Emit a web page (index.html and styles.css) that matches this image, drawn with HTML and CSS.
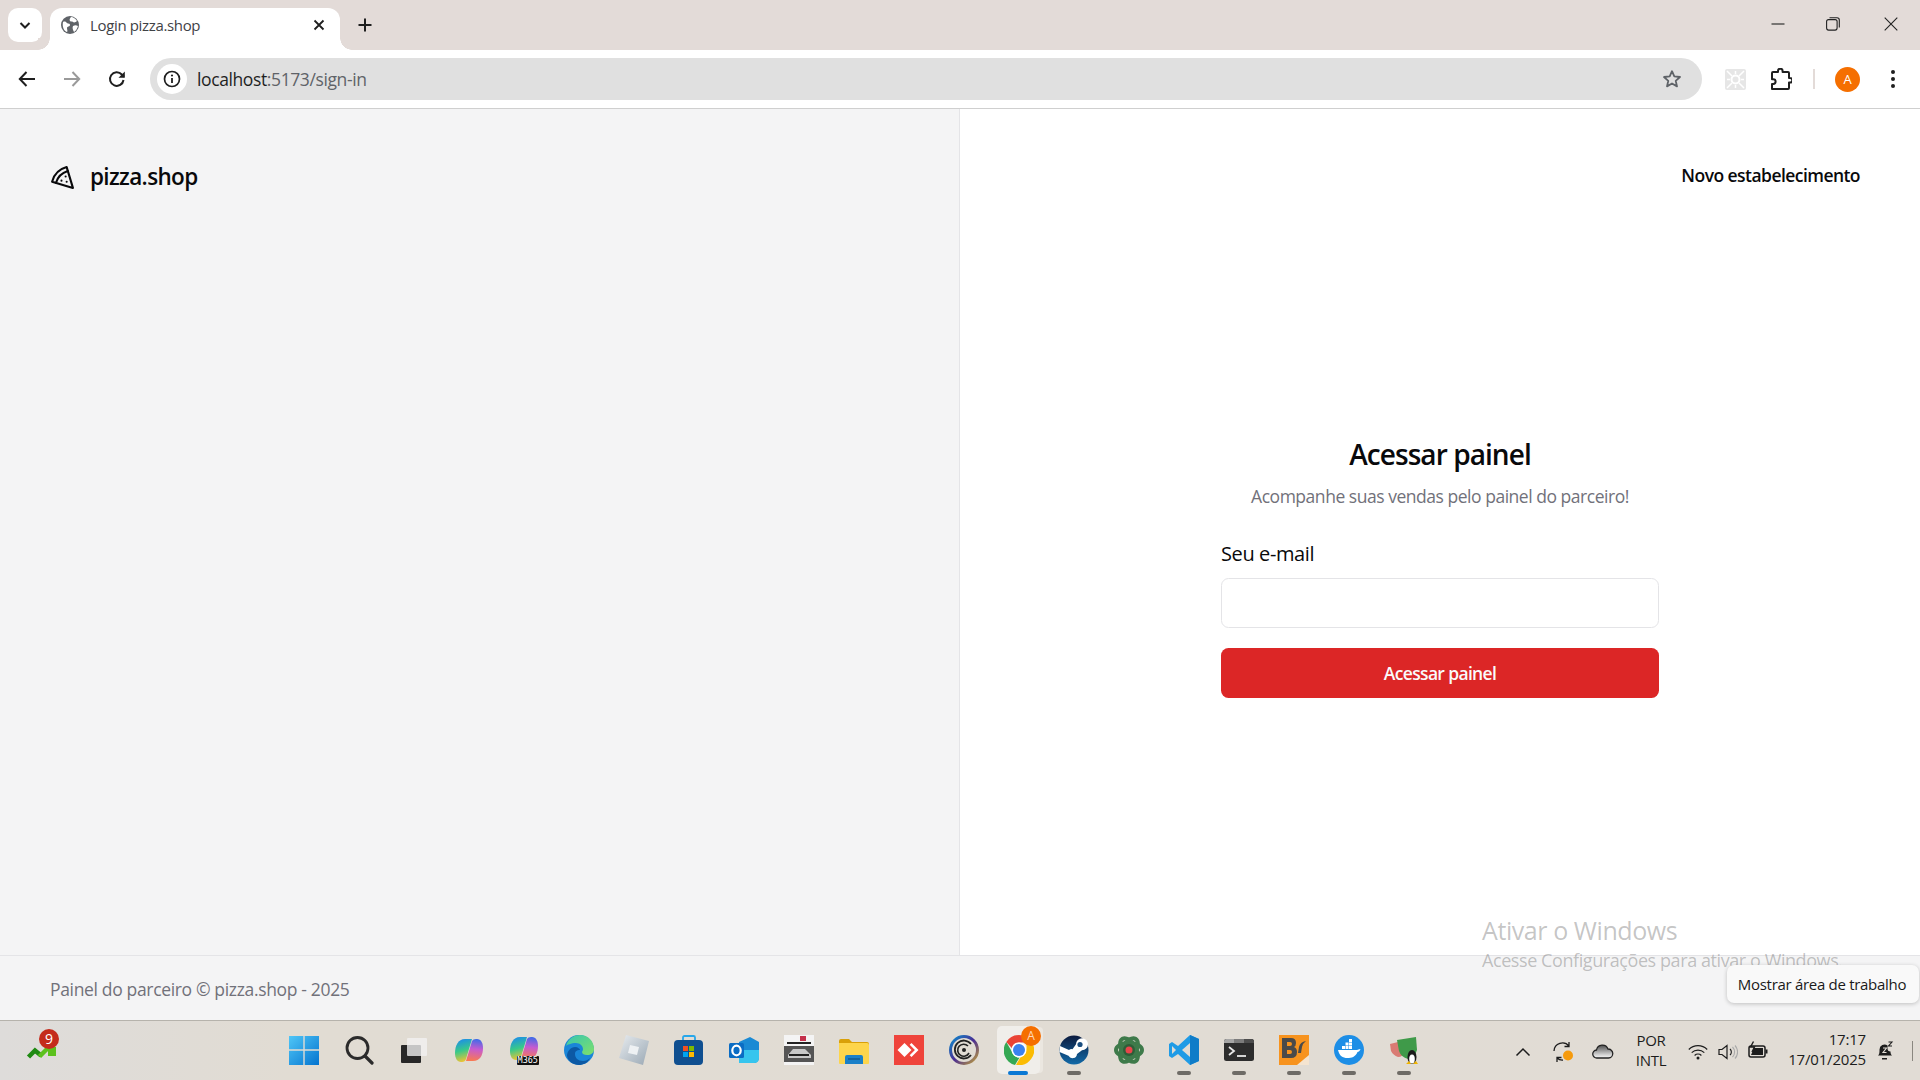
FILE: index.html
```html
<!DOCTYPE html>
<html lang="pt-BR">
<head>
<meta charset="utf-8">
<title>Login pizza.shop</title>
<link rel="stylesheet" href="styles.css">
</head>
<body>
<div class="screen">
  <div class="tabstrip">
    <div class="tab-list-btn"><svg width="16" height="16" viewBox="0 0 16 16"><path d="M3.500 6 8 10.500 12.500 6" fill="none" stroke="#1f1f1f" stroke-width="2"/></svg></div>
    <div class="tab">
      <svg class="favicon" width="18" height="18" viewBox="0 0 18 18"><circle cx="9" cy="9" r="9" fill="#5f6368"/><path d="M2 6c2-1 3 0 4 1s3 0 3 2-3 1-3 3 1 3 0 4C3 15 1 11 2 6zM10 1c2 0 5 2 6 4-1 1-3 2-4 1s-2 0-3-1 0-3 1-4zM12 10c2-1 3-1 5 0-1 3-2 5-4 6-1-2-2-4-1-6z" fill="#fff"/></svg>
      <span class="tab-title">Login pizza.shop</span>
      <svg class="tab-close" width="14" height="14" viewBox="0 0 14 14"><path d="M2.500 2.500l9 9M11.500 2.500l-9 9" stroke="#1f1f1f" stroke-width="1.800"/></svg>
    </div>
    <svg class="newtab" width="16" height="16" viewBox="0 0 16 16"><path d="M8 1.500v13M1.500 8h13" stroke="#1f1f1f" stroke-width="2"/></svg>
    <div class="win-controls">
      <svg width="14" height="14" viewBox="0 0 14 14"><path d="M.5 7h13" stroke="#222" stroke-width="1.100"/></svg>
      <svg class="win-restore" width="14" height="14" viewBox="0 0 14 14"><rect x=".6" y="2.600" width="10.500" height="10.500" rx="2" fill="none" stroke="#222" stroke-width="1.100"/><path d="M3.500.7h7.500a2.300 2.300 0 0 1 2.300 2.300v7.500" fill="none" stroke="#222" stroke-width="1.100"/></svg>
      <svg width="14" height="14" viewBox="0 0 14 14"><path d="M.7.700l12.600 12.600M13.300.7.700 13.300" stroke="#222" stroke-width="1.100"/></svg>
    </div>
  </div>

  <div class="toolbar">
    <div class="nav-icons">
      <svg width="20" height="20" viewBox="0 0 20 20"><path d="M18 10H3M9.500 3 2.800 10l6.700 7" fill="none" stroke="#1f1f1f" stroke-width="2"/></svg>
      <svg width="20" height="20" viewBox="0 0 20 20"><path d="M2 10h15M10.500 3l6.700 7-6.700 7" fill="none" stroke="#9a9a9a" stroke-width="2"/></svg>
      <svg width="20" height="20" viewBox="0 0 20 20"><path d="M16.500 11a6.800 6.800 0 1 1-1.700-5.500L17 7.800" fill="none" stroke="#1f1f1f" stroke-width="2"/><path d="M17.800 2.500v6.300h-6.300z" fill="#1f1f1f"/></svg>
    </div>
    <div class="omnibox">
      <div class="site-info"><svg width="18" height="18" viewBox="0 0 18 18"><circle cx="9" cy="9" r="7.500" fill="none" stroke="#1f1f1f" stroke-width="1.700"/><path d="M9 8v5" stroke="#1f1f1f" stroke-width="1.800"/><circle cx="9" cy="5.500" r="1.100" fill="#1f1f1f"/></svg></div>
      <span class="url"><span class="url-host">localhost</span>:5173/sign-in</span>
      <svg class="star" width="20" height="20" viewBox="0 0 20 20"><path d="M10 2.200l2.300 5.200 5.700.6-4.300 3.800 1.300 5.600L10 14.500l-5 2.900 1.300-5.600L2 8l5.700-.6z" fill="none" stroke="#5f6368" stroke-width="1.800" stroke-linejoin="round"/></svg>
    </div>
    <div class="toolbar-actions">
      <svg class="ext-pale" width="21" height="21" viewBox="0 0 21 21"><rect width="21" height="21" rx="2" fill="#e6e6e6"/><circle cx="10.500" cy="10.500" r="4" fill="none" stroke="#fff" stroke-width="2"/><path d="M2 2l5 5M19 2l-5 5M2 19l5-5M19 19l-5-5M2 10.500h3M16 10.500h3M10.500 2v3M10.500 16v3" stroke="#fff" stroke-width="1.500"/></svg>
      <svg class="puzzle" width="22" height="22" viewBox="0 0 22 22"><path d="M3 4h5V3a2.300 2.300 0 0 1 4.600 0v1H18a1 1 0 0 1 1 1v5h1a2.300 2.300 0 0 1 0 4.600h-1V20a1 1 0 0 1-1 1H2v-5h1.200a2.400 2.400 0 0 0 0-4.800H2V5a1 1 0 0 1 1-1z" fill="none" stroke="#1f1f1f" stroke-width="2" stroke-linejoin="round"/></svg>
      <span class="tb-sep"></span>
      <span class="avatar">A</span>
      <svg class="dots" width="6" height="20" viewBox="0 0 6 20"><circle cx="3" cy="3" r="2" fill="#1f1f1f"/><circle cx="3" cy="10" r="2" fill="#1f1f1f"/><circle cx="3" cy="17" r="2" fill="#1f1f1f"/></svg>
    </div>
  </div>

  <div class="page">
    <div class="columns">
      <aside class="left">
        <div class="brand">
          <svg width="25" height="25" viewBox="0 0 24 24" fill="none" stroke="currentColor" stroke-width="2" stroke-linecap="round" stroke-linejoin="round"><path d="M15 11h.01"/><path d="M11 15h.01"/><path d="M16 16h.01"/><path d="m2 16 20 6-6-20A20 20 0 0 0 2 16"/><path d="M5.710 17.110a17.040 17.040 0 0 1 11.400-11.400"/></svg>
          <span>pizza.shop</span>
        </div>
      </aside>
      <main class="right">
        <a class="new-link">Novo estabelecimento</a>
        <div class="form">
          <h1 class="title">Acessar painel</h1>
          <p class="subtitle">Acompanhe suas vendas pelo painel do parceiro!</p>
          <label class="label">Seu e-mail</label>
          <div class="input"></div>
          <button class="submit">Acessar painel</button>
        </div>
      </main>
    </div>
    <footer class="footer">Painel do parceiro © pizza.shop - 2025</footer>
    <div class="watermark">
      <div class="wm-big">Ativar o Windows</div>
      <div class="wm-small">Acesse Configurações para ativar o Windows.</div>
    </div>
    <div class="tooltip">Mostrar área de trabalho</div>
  </div>

  <div class="taskbar">
    <div class="widgets">
      <svg width="34" height="34" viewBox="0 0 34 34"><path d="M3.500 24l6.500-6.500 6 5" fill="none" stroke="#1f8a12" stroke-width="4.500"/><path d="M14.500 23.500l9-9" stroke="#5cc11d" stroke-width="4.500"/><rect x="23" y="14" width="8" height="9" fill="#5cc11d"/></svg>
      <span class="badge">9</span>
    </div>
    <div class="apps">
      <svg class="app" viewBox="0 0 30 30"><defs><linearGradient id="w" x1="0" y1="0" x2="1" y2="1"><stop offset="0" stop-color="#4fc6f7"/><stop offset="1" stop-color="#0474cf"/></linearGradient></defs><path d="M0 1h14.300v13.300H0zM15.700 1H30v13.300H15.700zM0 15.700h14.300V30H0zM15.700 15.700H30V30H15.700z" fill="url(#w)"/></svg>
      <svg class="app" viewBox="0 0 30 30"><circle cx="13.500" cy="13" r="10.500" fill="none" stroke="#2b2b2b" stroke-width="2.800"/><path d="M21 21l7 7" stroke="#2b2b2b" stroke-width="3.200" stroke-linecap="round"/></svg>
      <svg class="app" viewBox="0 0 30 30"><rect x="2" y="10" width="20" height="18" rx="1" fill="#272727"/><rect x="8" y="3" width="20" height="18" rx="1" fill="#f2f2f2" opacity=".78"/></svg>
      <svg class="app" viewBox="0 0 30 30"><defs><linearGradient id="c1" x1=".3" y1="0" x2=".5" y2="1"><stop offset="0" stop-color="#1c8dea"/><stop offset=".5" stop-color="#38c98a"/><stop offset="1" stop-color="#f4c430"/></linearGradient><linearGradient id="c2" x1=".5" y1="0" x2=".4" y2="1"><stop offset="0" stop-color="#3f6be8"/><stop offset=".45" stop-color="#c55bd0"/><stop offset="1" stop-color="#fa7a50"/></linearGradient></defs><path d="M11 4h7l-6 20q-1 3-4 3H7C3 27 1 23 1 18c0-7 3-14 10-14z" fill="url(#c1)"/><path d="M19 26h-7l6-20q1-2 4-2h1c4 0 6 4 6 9 0 7-3 13-10 13z" fill="url(#c2)"/></svg>
      <div class="app app-m365"><svg viewBox="0 0 30 30"><path d="M11 2h7l-6 20q-1 3-4 3H7C3 25 1 21 1 16c0-7 3-14 10-14z" fill="url(#c1)"/><path d="M19 24h-7l6-20q1-2 4-2h1c4 0 6 4 6 9 0 7-3 13-10 13z" fill="url(#c2)"/></svg><span class="m365">M365</span></div>
      <svg class="app" viewBox="0 0 30 30"><defs><linearGradient id="e1" x1="0" y1="0" x2="1" y2="1"><stop offset="0" stop-color="#37c6b0"/><stop offset="1" stop-color="#7fe06a"/></linearGradient></defs><circle cx="15" cy="15" r="15" fill="#1a86d8"/><path d="M2 11C4 3 11 0 16 0c8 0 14 6 14 14 0 4-3 6-7 6-3 0-5-1-5-3 0-1 1-1 1-3 0-3-3-6-7-6-5 0-9 2-10 3z" fill="url(#e1)"/><path d="M11 19c0 4 3 7 8 7 3 0 5-1 7-3-2 5-7 7-11 7-6 0-11-4-12-9 0-5 4-9 8-9 3 0 5 2 5 3-3 0-5 1-5 4z" fill="#0c59a4"/></svg>
      <svg class="app" viewBox="0 0 30 30"><defs><linearGradient id="r" x1="0" y1="0" x2="1" y2="1"><stop offset="0" stop-color="#e8ecef"/><stop offset="1" stop-color="#9aa8b4"/></linearGradient></defs><path d="M7 0l23 6-6 24L0 23z" fill="url(#r)"/><path d="M11 10l9 2-2 8-9-2z" fill="#eef1f3"/></svg>
      <svg class="app" viewBox="0 0 30 30"><path d="M9 6V2.500A1.500 1.500 0 0 1 10.500 1h9A1.500 1.500 0 0 1 21 2.500V6" fill="none" stroke="#27a7ea" stroke-width="1.800"/><rect y="5" width="29" height="25" rx="4" fill="#0f4f90"/><path d="M9 11h5v5H9z" fill="#f25022"/><path d="M15 11h5v5h-5z" fill="#7fba00"/><path d="M9 17h5v5H9z" fill="#00a4ef"/><path d="M15 17h5v5h-5z" fill="#ffb900"/></svg>
      <svg class="app" viewBox="0 0 30 30"><path d="M10 7l11-5 9 5v15q0 6-6 6H10z" fill="#1a8ad4"/><path d="M10 15h20v8q0 5-5 5H10z" fill="#36c5ee"/><rect y="8" width="15" height="15" rx="1.500" fill="#0a6cc4"/><ellipse cx="7.500" cy="15.500" rx="4.200" ry="4.800" fill="none" stroke="#fff" stroke-width="2.200"/></svg>
      <svg class="app" viewBox="0 0 30 30"><rect width="30" height="30" fill="#f4f4f4"/><rect y="11" width="30" height="16" fill="#555"/><path d="M4 20l5-6h12l6 6v3H4z" fill="#c8c8c8"/><rect x="5" y="19" width="20" height="2" fill="#222"/><rect x="16" y="1" width="6" height="5" fill="#c4314b"/><rect x="3" y="7" width="24" height="2" fill="#222"/></svg>
      <svg class="app" viewBox="0 0 30 30"><path d="M0 6a2 2 0 0 1 2-2h8l3 3h15a2 2 0 0 1 2 2v3H0z" fill="#d9a008"/><path d="M0 8h28a2 2 0 0 1 2 2v18a1 1 0 0 1-1 1H1a1 1 0 0 1-1-1z" fill="#fdd54b"/><path d="M6 22a2 2 0 0 1 2-2h14a2 2 0 0 1 2 2v7H6z" fill="#1a80c8"/><path d="M9 24h12" stroke="#0f4f82" stroke-width="1.200"/></svg>
      <svg class="app" viewBox="0 0 30 30"><rect width="30" height="30" fill="#ef443b"/><path d="M10.500 8l7 7-7 7-7-7z" fill="#fff"/><path d="M17.500 8l7 7-7 7-1.800-1.800 5.200-5.200-5.200-5.200z" fill="#fff"/></svg>
      <svg class="app" viewBox="0 0 30 30"><defs><linearGradient id="u" x1="0" y1="0" x2="1" y2="1"><stop offset="0" stop-color="#0a8fd0"/><stop offset=".5" stop-color="#4a2c92"/><stop offset="1" stop-color="#c2a23a"/></linearGradient></defs><circle cx="15" cy="15" r="13.500" fill="none" stroke="url(#u)" stroke-width="3"/><path d="M22 20a9 9 0 1 1 0-11" fill="none" stroke="#222" stroke-width="1.800"/><path d="M20 18a6 6 0 1 1-1-7" fill="none" stroke="#222" stroke-width="1.600"/><circle cx="15" cy="15" r="2" fill="#222"/></svg>
      <div class="app-active">
        <svg class="app" viewBox="0 0 30 30"><path d="M15 0a15 15 0 0 1 13 7.500H15a7.500 7.500 0 0 0-7.200 5.500L2.300 7A15 15 0 0 1 15 0z" fill="#ea4335"/><path d="M2.300 7l6.500 11.300a7.500 7.500 0 0 0 6.800 4.200L11 30A15 15 0 0 1 2.300 7z" fill="#34a853"/><path d="M28 7.500A15 15 0 0 1 12 29.800l6.600-11A7.500 7.500 0 0 0 21 7.500z" fill="#fbbc04"/><circle cx="15" cy="15" r="7.500" fill="#fff"/><circle cx="15" cy="15" r="6" fill="#3b82ee"/></svg>
        <span class="chrome-badge">A</span>
        <span class="pill pill-blue"></span>
      </div>
      <div class="app-run"><svg class="app" viewBox="0 0 30 30"><defs><linearGradient id="s" x1="0" y1="0" x2="0" y2="1"><stop offset="0" stop-color="#0c1b3e"/><stop offset="1" stop-color="#126aa8"/></linearGradient></defs><circle cx="15" cy="15" r="14.500" fill="url(#s)"/><path d="M.5 17l9 3.700a4.500 4.500 0 0 0 8.500-1.800l5-3.700a6 6 0 1 0-6-6l-3.500 5a4.500 4.500 0 0 0-3.500.7L1 11z" fill="#fff"/><circle cx="21" cy="9.500" r="2.600" fill="#1a4e80"/></svg><span class="pill"></span></div>
      <svg class="app" viewBox="0 0 30 30"><g fill="none" stroke="#3e7a4a" stroke-width="4"><ellipse cx="15" cy="15" rx="13" ry="7"/><ellipse cx="15" cy="15" rx="13" ry="7" transform="rotate(60 15 15)"/><ellipse cx="15" cy="15" rx="13" ry="7" transform="rotate(120 15 15)"/></g><circle cx="15" cy="15" r="6" fill="#2e5e38"/><circle cx="15" cy="15" r="3.500" fill="#e8454a"/></svg>
      <div class="app-run"><svg class="app" viewBox="0 0 30 30"><path d="M21 0l9 4v22l-9 4-12-11-6 4-3-2v-12l3-2 6 4z" fill="#1f9be6"/><path d="M21 0v30l9-4V4z" fill="#0f7cc8"/><path d="M21 8l-8 7 8 7z" fill="#e1dcd4"/><path d="M3 11v8l4-4z" fill="#e1dcd4"/></svg><span class="pill"></span></div>
      <div class="app-run"><svg class="app" viewBox="0 0 30 30"><rect y="4" width="30" height="22" rx="2.500" fill="#2d2d2d"/><path d="M0 8V6.500A2.500 2.500 0 0 1 2.500 4H10v4z" fill="#a6a6a6"/><path d="M10 4h10v4H10z" fill="#7c7c7c"/><path d="M20 4h7.500A2.500 2.500 0 0 1 30 6.500V8H20z" fill="#4d4d4d"/><path d="M5 12l5 4-5 4" fill="none" stroke="#e8e8e8" stroke-width="1.800"/><path d="M13 21h9" stroke="#e8e8e8" stroke-width="1.800"/></svg><span class="pill"></span></div>
      <div class="app-run"><svg class="app" viewBox="0 0 30 30"><rect width="30" height="30" fill="#f7931e"/><path d="M3 3h9q5 0 5 5 0 3-2 4 3 1 3 5 0 6-6 6H3z" fill="#4a4a4a"/><path d="M8 7v4h3q2 0 2-2t-2-2zM8 15v4h3q2 0 2-2t-2-2z" fill="#f7931e"/><path d="M27 6q-6 1-7 6l-1 6h3l1-6q1-4 4-6z" fill="#4a4a4a"/><path d="M30 20v10H18z" fill="#f4e4d0"/></svg><span class="pill"></span></div>
      <div class="app-run"><svg class="app" viewBox="0 0 30 30"><circle cx="15" cy="15" r="15" fill="#1d8ee6"/><path d="M4 15h19c1 0 2-1 3.500-1-.5 2-2 3-3 3-2 5-6 6-10 6-5 0-8-2-9.500-8z" fill="#fff"/><path d="M8 11h3v3H8zM11.500 11h3v3h-3zM15 11h3v3h-3zM11.500 7.500h3v3h-3zM15 7.500h3v3h-3zM15 4h3v3h-3z" fill="#fff"/></svg><span class="pill"></span></div>
      <div class="app-run"><svg class="app" viewBox="0 0 30 30"><path d="M1 9l12-3 2 11q-1 5-6 5-5-2-7-6z" fill="#d97b73"/><path d="M8 5l19-3 1 13q-2 7-9 9-7-2-9-8z" fill="#3f9a49"/><ellipse cx="23" cy="22" rx="4.500" ry="7" fill="#1a1a1a"/><ellipse cx="23" cy="24" rx="2.800" ry="4.500" fill="#fff"/><path d="M17 29l3-3 2 3zM24 29l3-3 2 3z" fill="#f0b400"/></svg><span class="pill"></span></div>
    </div>
    <div class="tray">
      <svg class="t-chev" width="16" height="10" viewBox="0 0 16 10"><path d="M1.500 8.500 8 2l6.500 6.500" fill="none" stroke="#1c1c1c" stroke-width="1.500"/></svg>
      <svg class="t-sync" width="22" height="22" viewBox="0 0 22 22"><path d="M2 10a8.500 8.500 0 0 1 15-5M5 17a8 8 0 0 0 6 2M17 1v4.500h-4.500M5 21v-4.500h4.500" fill="none" stroke="#1c1c1c" stroke-width="1.300"/><circle cx="16" cy="14.500" r="5" fill="#f59a0c"/></svg>
      <svg class="t-cloud" width="22" height="16" viewBox="0 0 22 16"><defs><linearGradient id="cl" x1="0" y1="0" x2="0" y2="1"><stop offset="0" stop-color="#4f4f4f"/><stop offset=".75" stop-color="#d4d4d4"/><stop offset="1" stop-color="#f4f4f4"/></linearGradient></defs><path d="M5 15a4 4 0 0 1-.5-8A6 6 0 0 1 16 6a4.500 4.500 0 0 1 .5 9z" fill="url(#cl)" stroke="#222" stroke-width="1.300"/></svg>
      <div class="t-lang"><span>POR</span><span>INTL</span></div>
      <svg class="t-wifi" width="20" height="16" viewBox="0 0 20 16"><path d="M.8 5.500a13 13 0 0 1 18.400 0M3.700 8.600a9 9 0 0 1 12.600 0M6.600 11.500a5 5 0 0 1 6.800 0" fill="none" stroke="#1c1c1c" stroke-width="1.200"/><circle cx="10" cy="14" r="1.500" fill="#1c1c1c"/></svg>
      <svg class="t-vol" width="20" height="16" viewBox="0 0 20 16"><path d="M1 5.500h3L9 1.500v13l-5-4H1z" fill="none" stroke="#1c1c1c" stroke-width="1.200"/><path d="M12 5a4 4 0 0 1 0 6" fill="none" stroke="#1c1c1c" stroke-width="1.100"/><path d="M14.500 3a7 7 0 0 1 0 10M17 1.500a9.500 9.500 0 0 1 0 13" fill="none" stroke="#aaa" stroke-width="1.100"/></svg>
      <svg class="t-bat" width="20" height="18" viewBox="0 0 20 18"><rect x="1" y="5" width="16" height="11" rx="2" fill="none" stroke="#1c1c1c" stroke-width="1.500"/><path d="M6 7h9v7H3z" fill="#1c1c1c"/><rect x="17.500" y="8.500" width="2" height="4" fill="#1c1c1c"/><path d="M5.500 .5 2.500 6h4L4 11" fill="none" stroke="#1c1c1c" stroke-width="1.400"/></svg>
      <div class="t-clock"><span>17:17</span><span>17/01/2025</span></div>
      <svg class="t-bell" width="18" height="20" viewBox="0 0 18 20"><path d="M2 14.500c1.500-1 1.500-3 1.500-6a5 5 0 0 1 8-4v3a3 3 0 0 0 3 3c0 2 .5 3 1.500 4z" fill="#1c1c1c"/><path d="M6 17h5v1.500H6z" fill="#1c1c1c"/><path d="M7 7h3.500L7 11.500h3.500" fill="none" stroke="#e1dcd4" stroke-width="1.100"/><path d="M12.500 1H16l-3.500 4H16" fill="none" stroke="#1c1c1c" stroke-width="1.100"/></svg>
      <span class="t-div"></span>
    </div>
  </div>
</div>
</body>
</html>
```
FILE: styles.css
```css
* { box-sizing: border-box; margin: 0; padding: 0; }
html, body { width: 1920px; height: 1080px; overflow: hidden; }
body { font-family: "Open Sans", "Noto Sans", sans-serif; color: #09090b; background: #fff; }
.screen { display: flex; flex-direction: column; width: 1920px; height: 1080px; }

/* tab strip */
.tabstrip { display: flex; align-items: flex-end; height: 50px; background: #e3dbd8; padding-left: 8px; flex: none; position: relative; }
.tab-list-btn { width: 34px; height: 34px; margin-bottom: 8px; background: #fff; border-radius: 10px; display: flex; align-items: center; justify-content: center; }
.tab { position: relative; display: flex; align-items: center; width: 290px; height: 42px; margin-left: 8px; padding: 0 14px 8px 11px; background: #fff; border-radius: 12px 12px 0 0; }
.tab::before, .tab::after { content: ""; position: absolute; bottom: 0; width: 12px; height: 12px; }
.tab::before { left: -12px; background: radial-gradient(circle at 0 0, #e3dbd8 11.500px, #fff 12px); }
.tab::after { right: -12px; background: radial-gradient(circle at 100% 0, #e3dbd8 11.500px, #fff 12px); }
.favicon { flex: none; }
.tab-title { margin-left: 11px; flex: 1; font-size: 15px; letter-spacing: -.35px; color: #3f4246; white-space: nowrap; }
.tab-close { flex: none; }
.newtab { margin: 0 0 17px 17px; flex: none; }
.win-controls { margin-left: auto; display: flex; gap: 41px; padding-right: 22px; margin-bottom: 19px; }
.win-restore { margin-right: 3px; }

/* toolbar */
.toolbar { display: flex; align-items: center; height: 59px; background: #fff; border-bottom: 1px solid #cfcfcf; border-radius: 12px 12px 0 0; flex: none; position: relative; }
.nav-icons { display: flex; align-items: center; gap: 25px; padding-left: 17px; width: 150px; flex: none; }
.omnibox { width: 1552px; height: 42px; background: #e0e0e0; border-radius: 21px; display: flex; align-items: center; padding: 0 20px 0 7px; flex: none; }
.site-info { width: 30px; height: 30px; border-radius: 50%; background: #fff; display: flex; align-items: center; justify-content: center; flex: none; }
.url { margin-left: 10px; font-size: 17.500px; letter-spacing: -.39px; color: #5f6368; flex: 1; white-space: nowrap; }
.url-host { color: #1f1f1f; }
.star { flex: none; }
.toolbar-actions { display: flex; align-items: center; flex: 1; padding-left: 23px; }
.puzzle { margin-left: 24px; }
.tb-sep { width: 2px; height: 20px; background: #e3dbd8; margin-left: 21px; }
.avatar { width: 25px; height: 25px; border-radius: 50%; background: #f56f00; color: #fff; font-size: 13px; display: flex; align-items: center; justify-content: center; margin-left: 20px; }
.dots { margin-left: 30px; }

/* page */
.page { flex: 1; display: flex; flex-direction: column; position: relative; min-height: 0; }
.columns { display: flex; flex: 1; min-height: 0; }
.left { width: 960px; background: #f4f4f5; border-right: 1px solid #e4e4e7; padding: 43px 50px; flex: none; }
.brand { display: flex; align-items: center; gap: 15px; font-size: 22.500px; font-weight: 600; letter-spacing: -.65px; line-height: 50px; height: 50px; color: #09090b; }
.right { flex: 1; display: flex; flex-direction: column; background: #fff; }
.new-link { align-self: flex-end; margin: 41px 60px 0 0; height: 50px; line-height: 50px; font-size: 17.500px; font-weight: 600; letter-spacing: -.55px; color: #09090b; white-space: nowrap; }
.form { width: 438px; margin: 233px 0 0 261px; display: flex; flex-direction: column; }
.title { font-size: 28px; line-height: 42px; font-weight: 600; letter-spacing: -.93px; text-align: center; color: #09090b; }
.subtitle { margin-top: 9px; font-size: 17.500px; line-height: 25px; letter-spacing: -.47px; text-align: center; color: #71717a; }
.label { margin-top: 32px; font-size: 20px; line-height: 25px; letter-spacing: -.4px; color: #09090b; }
.input { margin-top: 12px; height: 50px; border: 1px solid #e4e4e7; border-radius: 7.500px; background: #fff; }
.submit { margin-top: 20px; height: 50px; border: none; border-radius: 7.500px; background: #dc2626; color: #fafafa; font: 600 17.500px "Open Sans", "Noto Sans", sans-serif; letter-spacing: -.66px; }
.footer { height: 65px; flex: none; background: #f4f4f5; border-top: 1px solid #e4e4e7; padding: 2px 0 0 50px; display: flex; align-items: center; font-size: 17.500px; letter-spacing: -.34px; color: #71717a; }

/* overlays */
.watermark { position: absolute; left: 1482px; top: 806px; color: rgba(90,90,90,.36); white-space: nowrap; }
.wm-big { font-size: 25px; line-height: 30px; letter-spacing: -.42px; }
.wm-small { font-size: 18px; line-height: 26px; margin-top: 2px; letter-spacing: -.42px; }
.tooltip { position: absolute; left: 1727px; top: 856px; width: 192px; height: 38px; background: #f9f9f9; border-radius: 7px; box-shadow: 0 1px 4px rgba(0,0,0,.22); display: flex; align-items: center; justify-content: center; padding-right: 2px; font-size: 15px; letter-spacing: -.3px; color: #1a1a1a; white-space: nowrap; }

/* taskbar */
.taskbar { height: 60px; flex: none; background: linear-gradient(90deg, #dedcda 0%, #e1dcd3 15%, #e1dcd5 100%); border-top: 1px solid #b6b3ac; padding-bottom: 2px; display: flex; align-items: center; position: relative; }
.widgets { position: relative; width: 34px; height: 34px; margin-left: 25px; flex: none; }
.badge { position: absolute; left: 14px; top: -4px; width: 20px; height: 20px; border-radius: 50%; background: #c42b1c; color: #fff; font-size: 14px; display: flex; align-items: center; justify-content: center; }
.apps { display: flex; align-items: center; gap: 25px; margin-left: 230px; flex: none; }
.app { width: 30px; height: 30px; display: block; flex: none; }
.app-m365 { position: relative; }
.app-m365 svg { width: 30px; height: 30px; display: block; }
.m365 { position: absolute; right: 0; bottom: 0; background: #111; color: #fff; font-size: 8.500px; line-height: 9px; padding: 0 1px; border-radius: 1px; font-family: "DejaVu Sans Mono", monospace; }
.app-run, .app-active { position: relative; width: 30px; height: 30px; flex: none; }
.app-active::before { content: ""; position: absolute; left: -7px; top: -9px; width: 43px; height: 48px; background: #f0eeea; border-radius: 5px; box-shadow: 4px 0 0 -1px #ebe7e0; }
.app-active .app { position: relative; }
.chrome-badge { position: absolute; right: -7px; top: -9px; width: 20px; height: 20px; border-radius: 50%; background: #f56f00; color: #ffd9b8; font-size: 12px; display: flex; align-items: center; justify-content: center; }
.pill { position: absolute; left: 8px; bottom: -10px; width: 14px; height: 4px; border-radius: 2px; background: #6e6b66; }
.pill-blue { left: 4px; width: 20px; background: #0a78d4; }
.tray { position: absolute; left: 0; top: 0; width: 1920px; height: 59px; pointer-events: none; }
.tray > * { position: absolute; }
.t-chev { left: 1515px; top: 26px; }
.t-sync { left: 1552px; top: 20px; }
.t-cloud { left: 1592px; top: 22px; }
.t-lang { left: 1626px; width: 50px; top: 9px; display: flex; flex-direction: column; align-items: center; font-size: 15px; line-height: 20px; letter-spacing: -.3px; color: #1c1c1c; }
.t-wifi { left: 1688px; top: 23px; }
.t-vol { left: 1718px; top: 23px; }
.t-bat { left: 1748px; top: 20px; }
.t-clock { right: 54px; top: 8px; display: flex; flex-direction: column; align-items: flex-end; font-size: 15px; line-height: 20px; letter-spacing: -.18px; color: #1c1c1c; }
.t-bell { left: 1876px; top: 20px; }
.t-div { left: 1912px; top: 20px; width: 1px; height: 20px; background: #8a8780; }
```
